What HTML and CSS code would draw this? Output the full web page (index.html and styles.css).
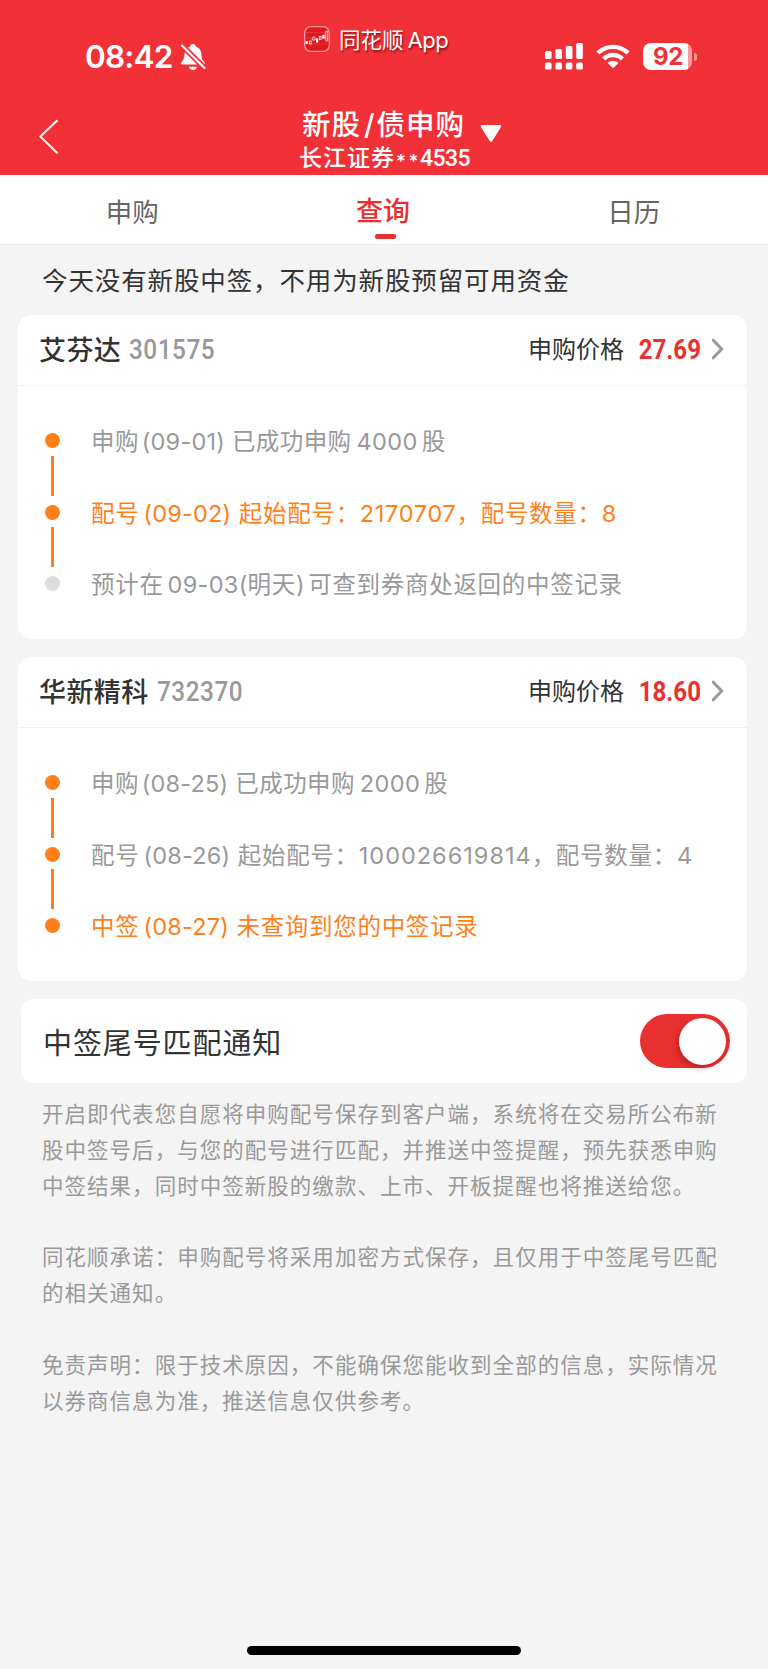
FILE: index.html
```html
<!DOCTYPE html>
<html lang="zh-CN">
<head>
<meta charset="utf-8">
<title>新股/债申购</title>
<link rel="stylesheet" href="styles.css">
</head>
<body>
<div class="screen">
  <header class="header">
    <div class="status">
      <div class="status-left">
        <span class="time">08:42</span>
        <svg class="bell" width="26" height="28" viewBox="0 0 26 28">
          <path fill="#fff" d="M13 1c1.700 0 2.700 1 2.900 2.400 3.600 1.200 5.300 4.100 5.500 8 .2 4.600 1.600 6.100 3 7.800.7.900.4 2.300-1 2.300H2.300c-1.500 0-1.700-1.400-1-2.300 1.500-1.700 3-3.200 3.200-7.800.2-3.900 2-6.800 5.600-8C10.300 2 11.300 1 13 1zM9 23.700h8c-.3 2-1.900 3.300-4 3.300s-3.700-1.300-4-3.300z"/>
          <path stroke="#f23037" stroke-width="5.500" d="M-1-.5 27 27.500"/>
          <path stroke="#fff" stroke-width="2.200" stroke-linecap="round" d="M2 2.500 24.500 25"/>
        </svg>
      </div>
      <div class="source">
        <svg width="26" height="26" viewBox="0 0 26 26">
          <rect x=".7" y=".7" width="24.600" height="24.600" rx="6" fill="#e0191f" stroke="#f79a9c" stroke-width="1.300"/>
          <path stroke="#ef4b50" stroke-width=".5" d="M2 6.500h22M2 12h22M2 18h22"/>
          <g fill="#fff"><rect x="1.500" y="15" width="2.500" height="3" rx=".8"/><rect x="12" y="12.300" width="2.200" height="4.300" rx=".6"/><rect x="18.300" y="8.800" width="2.400" height="4" rx=".6"/></g>
          <g fill="none" stroke="#fff" stroke-width=".8"><rect x="5.500" y="15" width="1.600" height="3"/><path d="M8.300 14v-2l1.500-1.500 1.200 1.500v2z"/><rect x="15.500" y="10.500" width="1.600" height="3"/><rect x="21.700" y="5" width="2" height="10" rx=".5"/></g>
        </svg>
        <span class="source-name">同花顺<span class="latin">App</span></span>
      </div>
      <div class="status-right">
        <svg class="signal" width="39" height="27" viewBox="0 0 39 27" fill="#fff">
          <rect x="0" y="8" width="6.600" height="8" rx="1.600"/><rect x="10.400" y="6" width="6.600" height="10" rx="1.600"/><rect x="20.800" y="3" width="6.600" height="13" rx="1.600"/><rect x="31.200" y="0" width="6.600" height="16" rx="1.600"/>
          <rect x="0" y="19.400" width="6.600" height="7.200" rx="1.600"/><rect x="10.400" y="19.400" width="6.600" height="7.200" rx="1.600"/><rect x="20.800" y="19.400" width="6.600" height="7.200" rx="1.600"/><rect x="31.200" y="19.400" width="6.600" height="7.200" rx="1.600"/>
        </svg>
        <svg class="wifi" width="34" height="25" viewBox="0 0 34 25" fill="none" stroke="#fff" stroke-width="4.300">
          <path d="M1.900 9.100a21.200 21.200 0 0 1 30.200 0"/>
          <path d="M7.700 14.900a13 13 0 0 1 18.600 0"/>
          <path fill="#fff" stroke="none" d="M11.600 18.900a7.600 7.600 0 0 1 10.800 0L17.800 23.600q-.8.800-1.600 0z"/>
        </svg>
        <span class="battery"><span class="battery-body">92</span><span class="battery-nub"></span></span>
      </div>
    </div>
    <div class="nav">
      <svg class="back" width="22" height="38" viewBox="0 0 22 38"><path d="M19.500 2.200 2.300 18.500 19.500 35.200" fill="none" stroke="#fff" stroke-width="2" stroke-linejoin="round"/></svg>
      <div class="titles">
        <div class="title">新股<span class="slash">/</span>债申购</div>
        <div class="account">长江证券<span class="stars">**</span><span class="account-no">4535</span></div>
      </div>
      <svg class="caret" width="22" height="18" viewBox="0 0 22 18"><path d="M2 0h18q1.800.2.900 2L12 16.500q-1 1.200-2 0L.9 2Q.2.200 2 0z" fill="#fff"/></svg>
    </div>
  </header>

  <nav class="tabs">
    <div class="tab first">申购</div>
    <div class="tab active">查询</div>
    <div class="tab last">日历</div>
  </nav>

  <main class="main">
    <p class="notice">今天没有新股中签，不用为新股预留可用资金</p>

    <section class="card">
      <div class="card-head">
        <span class="name">艾芬达</span><span class="code">301575</span>
        <span class="price-label">申购价格</span><span class="price">27.69</span>
        <svg class="chev" width="14" height="22" viewBox="0 0 14 22"><path d="M2.300 2.200 10.700 11 2.300 19.800" fill="none" stroke="#999" stroke-width="3" stroke-linecap="round"/></svg>
      </div>
      <ul class="steps">
        <li class="step buy"><i class="dot"></i><span>申购<b class="date">(09-01)</b>已成功申购<b class="num">4000</b>股</span></li>
        <li class="step current"><i class="dot"></i><span>配号<b class="date">(09-02)</b>起始配号：<b class="plain">2170707</b>，配号数量：<b class="plain">8</b></span></li>
        <li class="step pending"><i class="dot"></i><span>预计在<b class="next">09-03(</b>明天<b class="close">)</b>可查到券商处返回的中签记录</span></li>
      </ul>
    </section>

    <section class="card">
      <div class="card-head">
        <span class="name">华新精科</span><span class="code">732370</span>
        <span class="price-label">申购价格</span><span class="price">18.60</span>
        <svg class="chev" width="14" height="22" viewBox="0 0 14 22"><path d="M2.300 2.200 10.700 11 2.300 19.800" fill="none" stroke="#999" stroke-width="3" stroke-linecap="round"/></svg>
      </div>
      <ul class="steps">
        <li class="step buy"><i class="dot"></i><span>申购<b class="date">(08-25)</b>已成功申购<b class="num">2000</b>股</span></li>
        <li class="step"><i class="dot"></i><span>配号<b class="date">(08-26)</b>起始配号：<b class="long">100026619814</b>，配号数量：<b class="plain">4</b></span></li>
        <li class="step current"><i class="dot"></i><span>中签<b class="date">(08-27)</b>未查询到您的中签记录</span></li>
      </ul>
    </section>

    <section class="setting">
      <span>中签尾号匹配通知</span>
      <span class="switch"><span class="knob"></span></span>
    </section>

    <div class="terms">
      <p>开启即代表您自愿将申购配号保存到客户端，系统将在交易所公布新<br>股中签号后，与您的配号进行匹配，并推送中签提醒，预先获悉申购<br>中签结果，同时中签新股的缴款、上市、开板提醒也将推送给您。</p>
      <p>同花顺承诺：申购配号将采用加密方式保存，且仅用于中签尾号匹配<br>的相关通知。</p>
      <p>免责声明：限于技术原因，不能确保您能收到全部的信息，实际情况<br>以券商信息为准，推送信息仅供参考。</p>
    </div>
  </main>
  <div class="home-bar"></div>
</div>
</body>
</html>
```

FILE: styles.css
```css
* { box-sizing: border-box; }
body {
  margin: 0;
  background: #f4f4f4;
  font-family: Inter, "Noto Sans CJK SC", sans-serif;
  text-spacing-trim: space-all;
  text-autospace: no-autospace;
  white-space: nowrap;
}
p, ul { margin: 0; padding: 0; list-style: none; }
b { font-weight: 400; }
svg { display: block; flex: none; }

.screen { width: 768px; height: 1669px; display: flex; flex-direction: column; overflow: hidden; }

.header { height: 175px; background: #f23037; color: #fff; }
.status { height: 100px; display: grid; grid-template-columns: 304px 241px 1fr; align-items: start; }
.status-left { display: flex; padding: 38px 0 0 85px; }
.time { font-size: 31.500px; font-weight: 600; line-height: 38px; width: 95px; letter-spacing: -.8px; }
.bell { margin-top: 5px; }
.source { display: flex; gap: 9px; padding-top: 26px; font-size: 21.500px; line-height: 28px; text-shadow: 1px 2px 2px rgba(70, 0, 0, .6); }
.latin { margin-left: 4px; font-size: 22px; letter-spacing: -.5px; }
.status-right { display: flex; padding-top: 43px; }
.wifi { margin: 1px 0 0 12px; }
.battery { display: flex; align-items: center; gap: 2px; margin-left: 13px; }
.battery-body {
  width: 49px; height: 27px; border-radius: 8px;
  background: linear-gradient(90deg, #fff 45px, #f9999d 45px);
  color: #f23037; font-size: 24px; font-weight: 700; line-height: 27px; padding-left: 10px; letter-spacing: -.3px;
}
.battery-nub { width: 3px; height: 8px; border-radius: 0 3px 3px 0; background: #f9999d; }

.nav { height: 75px; display: grid; grid-template-columns: 299px 181px 1fr; align-items: start; }
.back { margin: 18px 0 0 38px; }
.title { font-size: 28.500px; font-weight: 500; line-height: 36px; margin-top: 7px; padding-left: 3px; letter-spacing: 1px; }
.slash { margin: 0 1px 0 3px; }
.account { display: flex; height: 31px; font-size: 23px; font-weight: 500; line-height: 31px; letter-spacing: 1px; }
.account-no { font-family: Roboto, sans-serif; font-size: 23px; letter-spacing: -.6px; }
.stars { width: 25px; padding: 3px 0 0 1px; font-size: 19px; letter-spacing: 2.500px; }
.caret { margin-top: 25px; }

.tabs { height: 70px; background: #fff; border-bottom: 1px solid #e9e9e9; display: flex; }
.tab { flex: 1; padding-top: 19px; text-align: center; font-size: 26.500px; line-height: 36px; color: #666; }
.tab.first { padding-left: 7px; }
.tab.last { padding-right: 9px; }
.tab.active { color: #e93030; font-weight: 500; font-size: 27px; }
.tab.active::after { content: ""; display: block; width: 21px; height: 5px; margin: 4px 0 0 117px; border-radius: 2px; background: #e93030; }

.main { flex: 1; }
.notice { height: 70px; line-height: 71px; padding-left: 42px; font-size: 25.500px; letter-spacing: .88px; color: #333; }

.card { width: 729px; height: 324px; margin: 0 0 18px 18px; border-radius: 13px; background: #fff; }
.card-head { height: 71px; display: flex; align-items: center; padding: 0 22px 2px 21px; border-bottom: 1px solid #f0f0f0; }
.name { margin-bottom: 1px; font-size: 27px; font-weight: 500; letter-spacing: .4px; color: #323232; }
.code { width: 90px; margin-left: 8px; font-family: Roboto, sans-serif; font-size: 28px; font-weight: 500; letter-spacing: .6px; color: #999; transform: scaleX(.87); transform-origin: left; }
.price-label { margin: 0 0 3px auto; font-size: 24px; color: #333; }
.price { width: 77px; font-family: Roboto, sans-serif; font-size: 28px; font-weight: 700; color: #e93030; text-align: right; transform: scaleX(.86); transform-origin: right; }
.chev { margin-left: 10px; }

.steps { padding: 19px 0 0 27px; }
.step { height: 71.500px; display: grid; grid-template-columns: 46px 1fr; align-items: center; font-size: 23.500px; letter-spacing: .7px; color: #999; }
.step > span { padding-bottom: 1px; }
.dot { position: relative; width: 15px; height: 15px; border-radius: 50%; background: #ff801a; }
.step + .step .dot::before { content: ""; position: absolute; left: 6px; top: -49px; width: 3px; height: 40px; background: #ff801a; }
.pending .dot { background: #ddd; }
.current { color: #ff801a; }
.buy { letter-spacing: .4px; }
.date { margin: 0 7.500px 0 4px; letter-spacing: .2px; }
.buy .date { margin: 0 7px 0 3px; }
.num { margin: 0 4px 0 5px; letter-spacing: .4px; }
.long { letter-spacing: 1px; }
.next { margin-left: 4px; letter-spacing: .3px; }
.close { margin-right: 3px; }

.setting { width: 726px; height: 84px; margin-left: 21px; padding: 0 17px 0 22px; border-radius: 13px; background: #fff; display: flex; align-items: center; justify-content: space-between; font-size: 29px; letter-spacing: .9px; color: #333; }
.switch { width: 90px; height: 54px; border-radius: 27px; background: #e93030; display: flex; align-items: center; justify-content: flex-end; padding-right: 4px; }
.knob { width: 47px; height: 47px; border-radius: 50%; background: #fff; box-shadow: -2px 3px 6px rgba(80, 0, 0, .3); }

.terms { padding: 14px 0 0 42px; font-size: 21.500px; letter-spacing: 1.030px; line-height: 35.850px; color: #999; }
.terms p + p { margin-top: 35.850px; }

.home-bar { width: 274px; height: 9px; margin: 0 auto 14px 247px; border-radius: 5px; background: #000; }
```
